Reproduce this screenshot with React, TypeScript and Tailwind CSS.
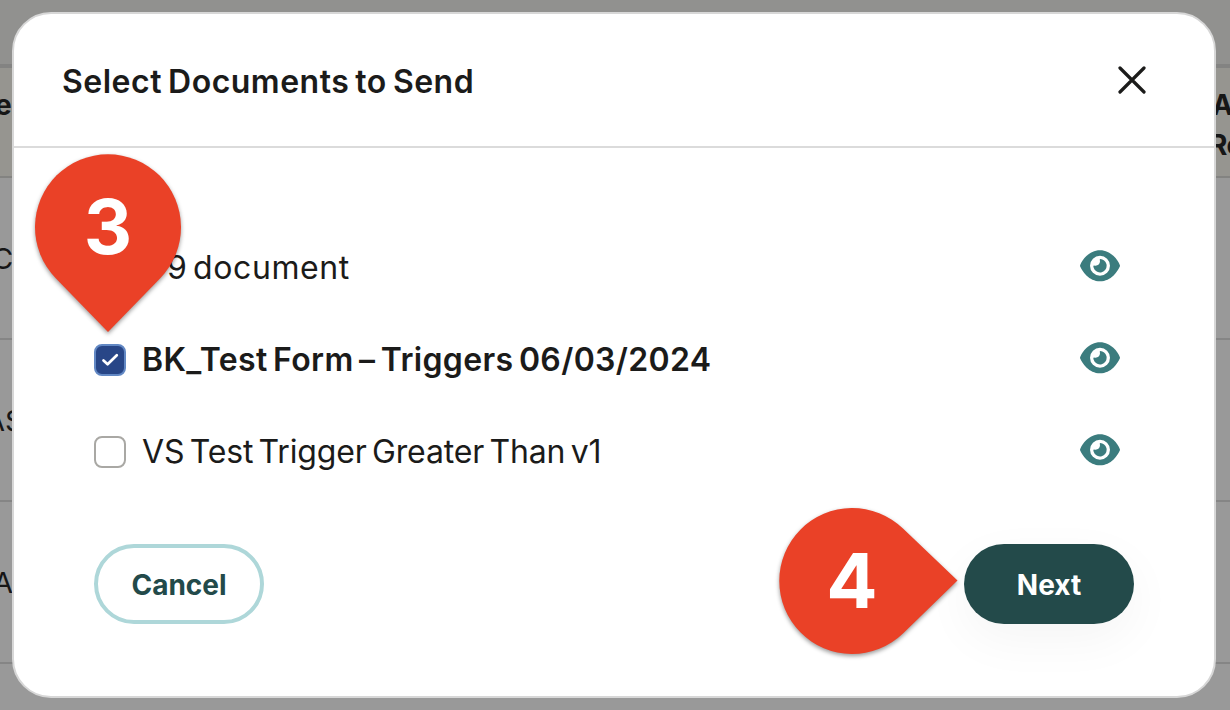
import React from "react";

type Doc = { name: string; checked: boolean; nameClass: string };

const documents: Doc[] = [
  { name: "9 document", checked: false, nameClass: "pl-[25px] tracking-[0.6px] [word-spacing:-4px]" },
  { name: "BK_Test Form – Triggers 06/03/2024", checked: true, nameClass: "font-semibold tracking-[0.35px] [word-spacing:-3px]" },
  { name: "VS Test Trigger Greater Than v1", checked: false, nameClass: "tracking-[-0.15px] [word-spacing:-3.5px]" },
];

const tableRows = [
  { left: "C", shift: "-ml-[8px]" },
  { left: "AS", shift: "-ml-[15px]" },
  { left: "A", shift: "-ml-[7px]" },
];

function EyeIcon() {
  return (
    <svg viewBox="0 0 576 512" className="h-[35.5px] w-[40px] shrink-0 fill-[#3b7c7e]">
      <path d="M288 32c-80.8 0-145.5 36.8-192.6 80.6C48.6 156 17.3 208 2.5 243.7c-3.3 7.9-3.3 16.7 0 24.6C17.3 304 48.6 356 95.4 399.4C142.5 443.2 207.2 480 288 480s145.5-36.8 192.6-80.6c46.8-43.5 78.1-95.4 93-131.1c3.3-7.9 3.3-16.7 0-24.6c-14.9-35.7-46.2-87.7-93-131.1C433.5 68.8 368.8 32 288 32zM144 256a144 144 0 1 1 288 0 144 144 0 1 1 -288 0zm144-64c0 35.3-28.7 64-64 64c-7.1 0-13.9-1.2-20.3-3.3c-5.5-1.8-11.9 1.6-11.7 7.4c.3 6.9 1.3 13.8 3.2 20.7c13.7 51.2 66.4 81.6 117.6 67.9s81.6-66.4 67.9-117.6c-11.1-41.5-47.8-69.4-88.6-71.1c-5.8-.2-9.2 6.1-7.4 11.7c2.1 6.4 3.3 13.2 3.3 20.3z" />
    </svg>
  );
}

function Checkbox({ checked }: { checked: boolean }) {
  return (
    <span
      className={
        checked
          ? "flex size-8 shrink-0 items-center justify-center rounded-[8px] border-2 border-[#6288c4] bg-[#284687]"
          : "flex size-8 shrink-0 rounded-[8px] border-2 border-[#a9a8a4] bg-white"
      }
    >
      {checked && (
        <svg viewBox="0 0 28 28" className="size-7 fill-none stroke-white stroke-[2.7]">
          <path d="M7.5 14.5 11.6 18.3 20.8 9.3" strokeLinecap="round" strokeLinejoin="round" />
        </svg>
      )}
    </span>
  );
}

function DocumentRow({ doc }: { doc: Doc }) {
  return (
    <div className="flex h-[92px] items-center">
      <Checkbox checked={doc.checked} />
      <span className={`ml-4 grow whitespace-nowrap text-[32px] leading-[40px] ${doc.nameClass}`}>{doc.name}</span>
      <div className="pb-[5px]">
        <EyeIcon />
      </div>
    </div>
  );
}

function Backdrop() {
  return (
    <div className="flex h-full flex-col bg-[#999999] text-[#161616]">
      <div className="h-16 shrink-0 bg-[#91918f]" />
      <div className="flex h-[114px] shrink-0 justify-between overflow-hidden border-t-4 border-b-2 border-t-[#838382] border-b-[#838381] bg-[#969590] text-[28px] leading-[40px] font-bold">
        <span className="-ml-[5px] pt-[17px]">e</span>
        <span className="w-[18px] pt-[17px] whitespace-nowrap">
          A<br />
          <span className="-ml-[3px] tracking-[-0.5px]">Re</span>
        </span>
      </div>
      {tableRows.map((row) => (
        <div key={row.left} className="flex h-[162px] shrink-0 items-center overflow-hidden border-b-2 border-[#858585] pt-[2px] text-[29px]">
          <span className={row.shift}>{row.left}</span>
        </div>
      ))}
    </div>
  );
}

export default function App() {
  return (
    <main className="relative h-[710px] w-[1230px] overflow-hidden font-['Inter',sans-serif] text-[#1b1b1a]">
      <Backdrop />

      <section className="absolute inset-0 pt-[12px] pl-[12px]">
        <div className="flex h-[686px] w-[1204px] flex-col overflow-hidden rounded-[39px] border-2 border-[#d7d7d7] bg-white">
          <header className="flex h-[134px] shrink-0 items-center justify-between border-b-2 border-[#dbdbdb] pr-[68px] pl-[48px]">
            <h1 className="pt-1 text-[32px] leading-[40px] font-semibold tracking-[0.5px] [word-spacing:-2.5px] whitespace-nowrap">Select Documents to Send</h1>
            <svg viewBox="0 0 28 28" className="mb-[1px] size-7 fill-none stroke-[#1b1b1a] stroke-[3.2]">
              <path d="M2 2 26 26M26 2 2 26" strokeLinecap="round" />
            </svg>
          </header>

          <div className="pt-[74px] pr-[94px] pl-[80px]">
            {documents.map((doc) => (
              <DocumentRow key={doc.name} doc={doc} />
            ))}
          </div>

          <footer className="flex justify-between pt-[46px] pr-[80px] pl-[80px] text-[28px] font-bold">
            <button className="h-20 w-[170px] rounded-full border-4 border-[#aed7d9] pt-[2px] text-[#234a4a]">Cancel</button>
            <button className="h-20 w-[170px] rounded-full bg-[#234a4a] pt-[2px] text-white shadow-[0_16px_50px_rgba(0,0,0,0.045)]">
              Next
            </button>
          </footer>
        </div>
      </section>

      <div className="absolute top-[154px] left-[35px] flex h-[180px] w-[146px] justify-center">
        <svg viewBox="0 0 146 180" className="absolute inset-0 overflow-visible fill-[#ea4127] drop-shadow-[0_2px_2px_rgba(0,0,0,0.4)]">
          <path d="M73 178 20.5 124A73 73 0 1 1 125.5 124Z" />
        </svg>
        <span className="relative pt-[35px] text-[75px] leading-[75px] font-bold text-white">3</span>
      </div>

      <div className="absolute top-[508px] left-[779px] flex h-[146px] w-[180px]">
        <svg viewBox="0 0 180 146" className="absolute inset-0 overflow-visible fill-[#ea4127] drop-shadow-[0_2px_2px_rgba(0,0,0,0.4)]">
          <path d="M178.5 72.5 124 20.5A73 73 0 1 0 124 125.5Z" />
        </svg>
        <span className="relative w-[146px] pt-[34px] text-center text-[76px] leading-[76px] font-bold text-white">4</span>
      </div>
    </main>
  );
}
